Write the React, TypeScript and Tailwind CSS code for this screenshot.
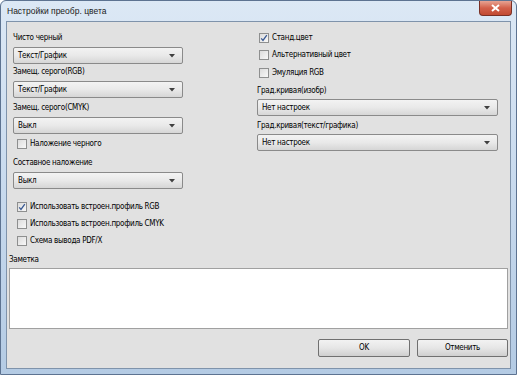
import { ReactNode } from "react";

const font = { fontFamily: '"DejaVu Sans Condensed", "Liberation Sans", Arial, sans-serif' };

function Check({ checked }: { checked?: boolean }) {
  return (
    <span className="relative flex h-[10px] w-[10px] shrink-0 items-center justify-center border border-[#8e8f8f] bg-gradient-to-br from-[#dcdcdc] to-[#f8f8f8]">
      {checked && (
        <svg width="8" height="8" viewBox="0 0 8 8" className="absolute">
          <path d="M1.2 4.3 L3 6.4 L6.8 1.2" fill="none" stroke="#3a5a94" strokeWidth="1.3" />
        </svg>
      )}
    </span>
  );
}

function CheckRow({ label, checked, className = "" }: { label: string; checked?: boolean; className?: string }) {
  return (
    <div className={`flex h-[12px] items-center gap-[3px] whitespace-nowrap ${className}`}>
      <Check checked={checked} />
      <span className="leading-[12px]">{label}</span>
    </div>
  );
}

function Label({ children, className = "" }: { children: ReactNode; className?: string }) {
  return <div className={`h-[12px] whitespace-nowrap leading-[12px] ${className}`}>{children}</div>;
}

function Select({ value, className = "" }: { value: string; className?: string }) {
  return (
    <div
      className={`flex h-[17px] items-center justify-between rounded-[2px] border border-[#8a8a8a] bg-gradient-to-b from-[#f3f3f3] via-[#e9e9e9] to-[#d6d6d6] pl-[4px] pr-[7px] ${className}`}
    >
      <span className="leading-[12px]">{value}</span>
      <svg width="6" height="4" viewBox="0 0 6 4">
        <path d="M0 0 H6 L3 3.5 Z" fill="#404040" />
      </svg>
    </div>
  );
}

function Button({ children, className = "" }: { children: ReactNode; className?: string }) {
  return (
    <div
      className={`flex h-[18px] items-center justify-center rounded-[2px] border border-[#707070] bg-gradient-to-b from-[#f2f2f2] via-[#e6e6e6] to-[#cfcfcf] ${className}`}
    >
      {children}
    </div>
  );
}

export default function App() {
  return (
    <div
      className="relative flex h-[375px] w-[517px] flex-col overflow-hidden rounded-t-[6px] border border-[#5d7391] bg-gradient-to-b from-[#dce8f5] via-[#c8daee] to-[#b4cbe4] text-[8px] tracking-[-0.3px] text-black"
      style={font}
    >
      {/* title bar */}
      <div className="flex h-[20px] shrink-0 items-start justify-between">
        <span
          className="pl-[6px] pt-[4px] text-[8.5px] leading-[12px] tracking-normal text-[#1a1a1a]"
          style={{ fontFamily: '"Liberation Sans", Arial, sans-serif' }}
        >
          Настройки преобр. цвета
        </span>
        <div className="mr-[4px] flex h-[15px] w-[33px] items-center justify-center rounded-b-[4px] border border-t-0 border-[#7a3025] bg-gradient-to-b from-[#e6a393] via-[#d2604a] to-[#c24a32]">
          <svg width="9" height="8" viewBox="0 0 9 8">
            <path d="M1 1 L8 7 M8 1 L1 7" stroke="#fff" strokeWidth="2" />
          </svg>
        </div>
      </div>

      {/* client area */}
      <div className="mx-[5px] mb-[5px] flex flex-1 flex-col border border-[#7f93ab] bg-[#e1e1e1] px-[2px]">
        <div className="flex pt-[10px]">
          {/* left column */}
          <div className="ml-[4px] flex w-[170px] flex-col">
            <Label>Чисто черный</Label>
            <Select value="Текст/График" className="mt-[3px]" />
            <Label className="mt-[2px]">Замещ. серого(RGB)</Label>
            <Select value="Текст/График" className="mt-[3px]" />
            <Label className="mt-[4px]">Замещ. серого(CMYK)</Label>
            <Select value="Выкл" className="mt-[3px]" />
            <CheckRow label="Наложение черного" className="mt-[4px] pl-[4px]" />
            <Label className="mt-[7px]">Составное наложение</Label>
            <Select value="Выкл" className="mt-[3px]" />
            <CheckRow label="Использовать встроен.профиль RGB" checked className="mt-[12px] pl-[4px]" />
            <CheckRow label="Использовать встроен.профиль CMYK" className="mt-[5px] pl-[4px]" />
            <CheckRow label="Схема вывода PDF/X" className="mt-[5px] pl-[4px]" />
          </div>

          {/* right column */}
          <div className="ml-[74px] flex w-[241px] flex-col">
            <CheckRow label="Станд.цвет" checked className="pl-[2px]" />
            <CheckRow label="Альтернативный цвет" className="mt-[5px] pl-[2px]" />
            <CheckRow label="Эмуляция RGB" className="mt-[6px] pl-[2px]" />
            <Label className="mt-[6px]">Град.кривая(изобр)</Label>
            <Select value="Нет настроек" className="mt-[2px]" />
            <Label className="mt-[4px]">Град.кривая(текст/графика)</Label>
            <Select value="Нет настроек" className="mt-[2px]" />
          </div>
        </div>

        <Label className="mt-[7px]">Заметка</Label>
        <div className="mt-[2px] h-[61px] border border-[#a0a0a0] bg-white" />

        <div className="mt-[10px] flex justify-end gap-[7px]">
          <Button className="w-[92px]">OK</Button>
          <Button className="w-[91px]">Отменить</Button>
        </div>
      </div>
    </div>
  );
}
